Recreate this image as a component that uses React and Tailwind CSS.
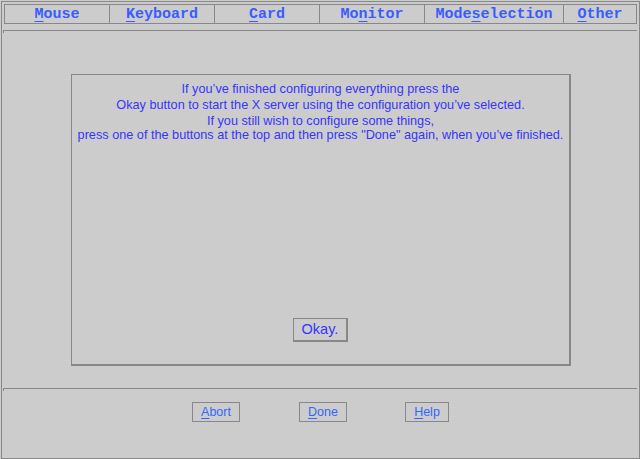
import React from "react";

const tabs = [
  { pre: "", u: "M", post: "ouse", w: "w-[105px]" },
  { pre: "", u: "K", post: "eyboard", w: "w-[105px]" },
  { pre: "", u: "C", post: "ard", w: "w-[105px]" },
  { pre: "Mo", u: "n", post: "itor", w: "w-[105px]" },
  { pre: "Mode", u: "s", post: "election", w: "w-[139px]" },
  { pre: "", u: "O", post: "ther", w: "w-[72px]" },
];

function Sep() {
  return (
    <div className="ml-[1px] w-[634px] h-[3px] border-t border-l border-[#888888]" />
  );
}

function Btn({ u, rest, className }) {
  return (
    <div
      className={
        "h-[20px] border border-[#888888] flex items-center justify-center text-[12.5px] leading-none text-[#3366ff] " +
        className
      }
      style={{ fontFamily: '"Liberation Sans", Arial, sans-serif' }}
    >
      <span>
        <span className="underline underline-offset-2">{u}</span>
        {rest}
      </span>
    </div>
  );
}

export default function App() {
  return (
    <div className="w-[640px] h-[459px] bg-[#cccccc] overflow-hidden">
      <div className="ml-[1px] mt-[1px] w-[639px] h-[458px] border border-[#888888] box-border">
        {/* tab bar */}
        <div
          className="ml-[2px] mt-[2px] w-[633px] h-[20px] border border-[#888888] flex"
          style={{ fontFamily: '"Liberation Mono", "Courier New", monospace' }}
        >
          {tabs.map((t, i) => (
            <div
              key={i}
              className={
                t.w +
                " h-full flex items-center justify-center text-[15px] font-bold leading-none text-[#3a5cff] " +
                (i < tabs.length - 1 ? "border-r border-[#888888]" : "")
              }
            >
              <span>
                {t.pre}
                <span className="underline underline-offset-[3px]">{t.u}</span>
                {t.post}
              </span>
            </div>
          ))}
        </div>

        <div className="mt-[6px]">
          <Sep />
        </div>

        {/* dialog */}
        <div
          className="ml-[69px] mt-[41px] w-[500px] h-[292px] border-t border-l border-r-2 border-b-2 border-[#888888] flex flex-col items-center"
          style={{ fontFamily: '"Liberation Sans", Arial, sans-serif' }}
        >
          <div className="mt-[6px] text-[12.7px] text-[#3535ff] text-center leading-[16px]">
            <div>If you’ve finished configuring everything press the</div>
            <div>Okay button to start the X server using the configuration you’ve selected.</div>
            <div>If you still wish to configure some things,</div>
            <div className="-mt-[2px]">
              press one of the buttons at the top and then press "Done" again, when you’ve finished.
            </div>
          </div>
          <div className="mt-auto mb-[22px] w-[55px] h-[24px] border-t border-l border-r-2 border-b-2 border-[#888888] flex items-center justify-center text-[14.5px] leading-none text-[#3535ff]">
            Okay.
          </div>
        </div>

        <div className="mt-[22px]">
          <Sep />
        </div>

        <div className="mt-[11px] flex">
          <Btn u="A" rest="bort" className="ml-[190px] w-[48px]" />
          <Btn u="D" rest="one" className="ml-[59px] w-[48px]" />
          <Btn u="H" rest="elp" className="ml-[58px] w-[44px]" />
        </div>
      </div>
    </div>
  );
}
